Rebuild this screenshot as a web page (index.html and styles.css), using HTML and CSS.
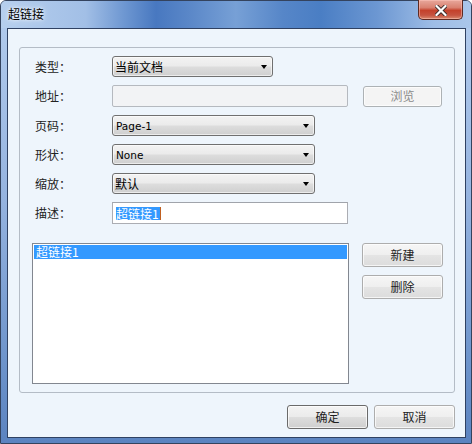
FILE: index.html
```html
<!DOCTYPE html>
<html>
<head>
<meta charset="utf-8">
<link rel="stylesheet" href="styles.css">
</head>
<body>
<div class="window">
  <div class="titlebar">
    <span class="title">超链接</span>
    <div class="close">
      <svg width="12" height="11" viewBox="0 0 12 11">
        <path d="M1.5 1 L10.5 10 M10.5 1 L1.5 10" stroke="#3a2a28" stroke-width="4" stroke-linecap="square"/>
        <path d="M1.5 1 L10.5 10 M10.5 1 L1.5 10" stroke="#ffffff" stroke-width="2.2" stroke-linecap="square"/>
      </svg>
    </div>
  </div>
  <div class="client">
    <div class="group">
      <div class="form">
        <div class="row">
          <span class="label">类型：</span>
          <div class="combo short"><span class="val">当前文档</span><span class="arrow"></span></div>
        </div>
        <div class="row tall">
          <span class="label">地址：</span>
          <div class="input disabled"></div>
          <div class="btn browse">浏览</div>
        </div>
        <div class="row">
          <span class="label">页码：</span>
          <div class="combo"><span class="val latin">Page-1</span><span class="arrow"></span></div>
        </div>
        <div class="row">
          <span class="label">形状：</span>
          <div class="combo"><span class="val latin">None</span><span class="arrow"></span></div>
        </div>
        <div class="row">
          <span class="label">缩放：</span>
          <div class="combo"><span class="val">默认</span><span class="arrow"></span></div>
        </div>
        <div class="row tall">
          <span class="label">描述：</span>
          <div class="input"><span class="sel">超链接1</span><span class="caret"></span></div>
        </div>
      </div>
      <div class="listarea">
        <div class="listbox">
          <div class="item selected">超链接1</div>
        </div>
        <div class="sidebtns">
          <div class="btn light">新建</div>
          <div class="btn light">删除</div>
        </div>
      </div>
    </div>
    <div class="footer">
      <div class="btn default">确定</div>
      <div class="btn light">取消</div>
    </div>
  </div>
</div>
</body>
</html>
```
FILE: styles.css
```css
html, body {
  margin: 0;
  padding: 0;
}
body {
  width: 472px;
  height: 444px;
  overflow: hidden;
  font-family: "Noto Sans CJK SC", "DejaVu Sans", sans-serif;
  font-size: 12px;
  color: #1e1e1e;
  background: #ffffff;
}
.window {
  box-sizing: border-box;
  width: 472px;
  height: 444px;
  display: flex;
  flex-direction: column;
  border: 1px solid #34435e;
  border-radius: 6px 6px 0 0;
  background: linear-gradient(to bottom, #b4cdee 0%, #95b3df 45%, #6f95cc 80%, #5b83c0 100%);
}
.titlebar {
  height: 27px;
  flex: none;
  display: flex;
  align-items: flex-start;
  border-radius: 5px 5px 0 0;
  background: linear-gradient(to right, #b6cfee 0%, #a2bfe6 18%, #6f98d2 26%, #4878c0 33%, #5a87c8 40%, #77a0d6 50%, #5686c8 60%, #4a7ec4 68%, #6c97d2 80%, #9ebde6 92%, #aac6ea 100%);
}
.title {
  margin: 6px 0 0 7px;
  font-size: 12px;
  line-height: 14px;
  color: #000;
  text-shadow: 0 0 6px rgba(255,255,255,0.9), 0 0 3px rgba(255,255,255,0.9);
}
.close {
  margin: -1px 8px 0 auto;
  box-sizing: border-box;
  width: 45px;
  height: 20px;
  border: 1px solid #5e2a22;
  border-top: none;
  border-radius: 0 0 5px 5px;
  background: linear-gradient(to bottom, #e8a89c 0%, #d98170 40%, #c4412b 55%, #c65340 80%, #d98a6e 100%);
  display: flex;
  align-items: center;
  justify-content: center;
  box-shadow: inset 0 0 0 1px rgba(255,200,190,0.5);
}
.close svg {
  display: block;
  margin-top: 1px;
}
.client {
  flex: 1;
  box-sizing: border-box;
  margin: 0 5px 5px 6px;
  border: 1px solid #2f4162;
  background: #eef5fc;
  padding: 18px 10px 0 11px;
  display: flex;
  flex-direction: column;
}
.group {
  box-sizing: border-box;
  height: 346px;
  border: 1px solid #b4bcc6;
  border-radius: 3px;
  padding: 8px 0 0 15px;
  display: flex;
  flex-direction: column;
}
.form {
  display: flex;
  flex-direction: column;
  gap: 8px;
}
.row {
  height: 21px;
  display: flex;
  align-items: center;
}
.row.tall {
  height: 22px;
}
.label {
  width: 77px;
  flex: none;
  color: #222;
  line-height: 14px;
}
.combo {
  box-sizing: border-box;
  width: 203px;
  height: 21px;
  border: 1px solid #707070;
  border-radius: 3px;
  background: linear-gradient(to bottom, #f3f3f3 0%, #ebebeb 48%, #dddddd 52%, #cfcfcf 100%);
  display: flex;
  align-items: center;
  padding: 0 5px 0 2px;
  box-shadow: inset 0 0 0 1px rgba(255,255,255,0.6);
}
.combo.short {
  width: 161px;
}
.val {
  flex: 1;
  color: #000;
  line-height: 14px;
  white-space: nowrap;
}
.val.latin {
  font-family: "DejaVu Sans", "Liberation Sans", sans-serif;
  font-size: 10.5px;
  padding-left: 1px;
}
.arrow {
  width: 0;
  height: 0;
  border-left: 3.5px solid transparent;
  border-right: 3.5px solid transparent;
  border-top: 4px solid #000;
  margin-top: 1px;
}
.input {
  box-sizing: border-box;
  width: 236px;
  height: 22px;
  border: 1px solid #abadb3;
  border-top-color: #a0a4ab;
  background: #ffffff;
  display: flex;
  align-items: center;
  padding-left: 3px;
}
.input.disabled {
  background: #f2f3f5;
  border-color: #b5b9bf;
  border-radius: 2px;
}
.sel {
  background: #3399ff;
  color: #ffffff;
  line-height: 13px;
  height: 13px;
  padding-right: 1px;
}
.caret {
  width: 1px;
  height: 13px;
  background: #c06020;
}
.btn {
  box-sizing: border-box;
  width: 81px;
  height: 24px;
  border: 1px solid #707070;
  border-radius: 3px;
  background: linear-gradient(to bottom, #f3f3f3 0%, #ebebeb 48%, #dddddd 52%, #cfcfcf 100%);
  box-shadow: inset 0 0 0 1px rgba(255,255,255,0.7);
  display: flex;
  align-items: center;
  justify-content: center;
  color: #1e1e1e;
  line-height: 14px;
}
.btn.light {
  border-color: #adadad;
  background: linear-gradient(to bottom, #f6f6f6 0%, #efefef 48%, #e4e4e4 52%, #dcdcdc 100%);
}
.btn.browse {
  width: 79px;
  height: 21px;
  margin-left: 15px;
  border-color: #adb2b5;
  background: #f4f4f4;
  color: #8a8a8a;
}
.listarea {
  margin-top: 19px;
  margin-left: -3px;
  display: flex;
  align-items: flex-start;
}
.listbox {
  box-sizing: border-box;
  width: 317px;
  height: 141px;
  border: 1px solid #828790;
  background: #ffffff;
  padding: 1px;
}
.item {
  height: 14px;
  line-height: 14px;
  padding-left: 2px;
  white-space: nowrap;
}
.item.selected {
  background: #3399ff;
  color: #ffffff;
}
.sidebtns {
  margin-left: 13px;
  display: flex;
  flex-direction: column;
  gap: 8px;
}
.footer {
  margin-top: 12px;
  display: flex;
  justify-content: flex-end;
  gap: 6px;
}
.btn.default {
  border-color: #6a6a6a;
}
```
